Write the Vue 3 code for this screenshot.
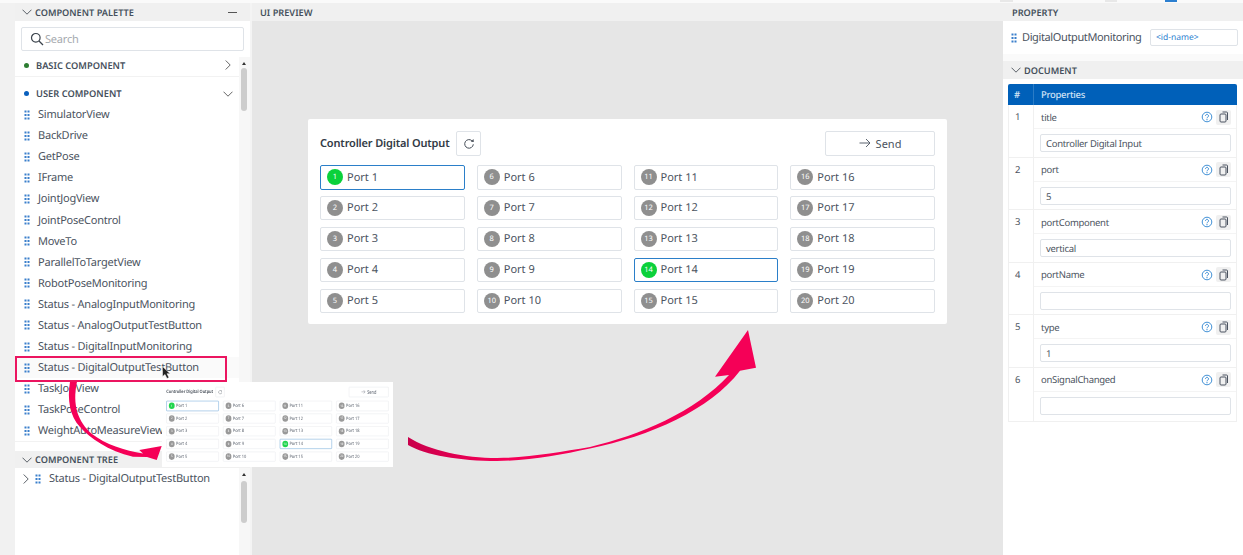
<script setup>
const items = ['SimulatorView','BackDrive','GetPose','IFrame','JointJogView','JointPoseControl','MoveTo','ParallelToTargetView','RobotPoseMonitoring','Status - AnalogInputMonitoring','Status - AnalogOutputTestButton','Status - DigitalInputMonitoring','Status - DigitalOutputTestButton','TaskJogView','TaskPoseControl','WeightAutoMeasureView']
const ports = []
for (let r = 1; r <= 5; r++) for (let c = 0; c < 4; c++) { const n = r + c * 5; ports.push({ n, on: n === 1 || n === 14 }) }
const props = [
  { k: 'title', v: 'Controller Digital Input' },
  { k: 'port', v: '5' },
  { k: 'portComponent', v: 'vertical' },
  { k: 'portName', v: '' },
  { k: 'type', v: '1' },
  { k: 'onSignalChanged', v: '' }
]
const grip = [[0.5,0.5],[3.5,0.5],[0.5,4],[3.5,4],[0.5,7.5],[3.5,7.5]]
</script>

<template>
  <div class="page">
    <div class="topstrip"><i class="tick t1"></i><i class="tick t2"></i><i class="tick t3"></i></div>
    <div class="main">
      <div class="gutter"></div>

      <aside class="left">
        <header class="head">
          <svg class="chev" viewBox="0 0 10 6"><path d="M.5.7 5 5.200 9.500.7"/></svg>
          <span class="title">COMPONENT PALETTE</span>
          <span class="minus"></span>
        </header>
        <div class="searchwrap">
          <div class="search">
            <svg class="lens" viewBox="0 0 14 14"><circle cx="5.800" cy="5.800" r="4.300"/><path d="M9 9l4 4"/></svg>
            <span>Search</span>
          </div>
        </div>
        <div class="scrollarea list">
          <div class="content">
            <div class="group basic">
              <i class="dot green"></i><span class="gname">BASIC COMPONENT</span>
              <svg class="rchev" viewBox="0 0 6 10"><path d="M.7.5 5.200 5 .7 9.500"/></svg>
            </div>
            <div class="group user">
              <i class="dot blue"></i><span class="gname">USER COMPONENT</span>
              <svg class="dchev" viewBox="0 0 10 6"><path d="M.5.7 5 5.200 9.500.7"/></svg>
            </div>
            <div v-for="it in items" :key="it" class="item" :class="{ hot: it === 'Status - DigitalOutputTestButton' }">
              <svg class="grip" viewBox="0 0 6 10"><rect v-for="(g, i) in grip" :key="i" :x="g[0]" :y="g[1]" width="2" height="2"/></svg>
              <span>{{ it }}</span>
            </div>
          </div>
          <div class="bar">
            <i class="up"></i>
            <i class="thumb t-list"></i>
          </div>
        </div>
        <div class="gap"></div>
        <header class="head tree-head">
          <svg class="chev" viewBox="0 0 10 6"><path d="M.5.7 5 5.200 9.500.7"/></svg>
          <span class="title">COMPONENT TREE</span>
        </header>
        <div class="scrollarea tree">
          <div class="content">
            <div class="node">
              <svg class="nchev" viewBox="0 0 6 10"><path d="M.7.5 5.200 5 .7 9.500"/></svg>
              <svg class="grip" viewBox="0 0 6 10"><rect v-for="(g, i) in grip" :key="i" :x="g[0]" :y="g[1]" width="2" height="2"/></svg>
              <span>Status - DigitalOutputTestButton</span>
            </div>
          </div>
          <div class="bar">
            <i class="up"></i>
            <i class="thumb t-tree"></i>
          </div>
        </div>
      </aside>

      <div class="split"></div>

      <section class="center">
        <header class="head chead"><span class="title">UI PREVIEW</span></header>
        <div class="stage">
          <div class="card">
            <div class="card-top">
              <strong>Controller Digital Output</strong>
              <button class="refresh">
                <svg viewBox="0 0 12 12"><path d="M10.300 6.300A4.300 4.300 0 1 1 8.900 2.700"/><path class="fill" d="M7.800 3.700 10.800 4 10.500 1z"/></svg>
              </button>
              <button class="send">
                <svg viewBox="0 0 12 10"><path d="M.5 5h10.500M7 1l4 4-4 4"/></svg>
                <span>Send</span>
              </button>
            </div>
            <div class="ports">
              <div v-for="p in ports" :key="p.n" class="port" :class="{ on: p.on }">
                <i class="badge">{{ p.n }}</i><span>Port {{ p.n }}</span>
              </div>
            </div>
          </div>
        </div>
      </section>

      <aside class="right">
        <header class="head rhead"><span class="title">PROPERTY</span></header>
        <div class="idrow">
          <svg class="grip" viewBox="0 0 6 10"><rect v-for="(g, i) in grip" :key="i" :x="g[0]" :y="g[1]" width="2" height="2"/></svg>
          <span class="cname">DigitalOutputMonitoring</span>
          <div class="idname">&lt;id-name&gt;</div>
        </div>
        <div class="rgap"></div>
        <header class="head dhead">
          <svg class="chev" viewBox="0 0 10 6"><path d="M.5.7 5 5.200 9.500.7"/></svg>
          <span class="title">DOCUMENT</span>
        </header>
        <div class="tablewrap">
          <div class="thead"><span class="th-n">#</span><span class="th-p">Properties</span></div>
          <div v-for="(p, i) in props" :key="p.k" class="prow">
            <div class="pnum">{{ i + 1 }}</div>
            <div class="pbody">
              <div class="plabel">
                <span class="pkey">{{ p.k }}</span>
                <svg class="help" viewBox="0 0 12 12"><circle cx="6" cy="6" r="4.800"/><path d="M4.500 4.800a1.500 1.500 0 1 1 2.300 1.300c-.6.400-.8.600-.8 1.200"/><circle class="fill" cx="6" cy="8.700" r=".6"/></svg>
                <span class="copy"><svg viewBox="0 0 12 12"><rect x="2" y="3" width="6" height="8" rx="1"/><path d="M4.500 1h4a1 1 0 0 1 1 1v7"/></svg></span>
              </div>
              <div class="pinput"><div class="field">{{ p.v }}</div></div>
            </div>
          </div>
        </div>
      </aside>
    </div>

    <!-- annotations lying over the screenshot -->
    <div class="callout"></div>
    <svg class="cursor" viewBox="0 0 9 13"><path d="M.5.500v10l2.500-2 2 4 2-1-2-3.800h3.200z"/></svg>
    <svg class="arrows" viewBox="0 0 1243 555">
      <defs>
        <linearGradient id="fade" x1="408" y1="0" x2="500" y2="0" gradientUnits="userSpaceOnUse">
          <stop offset="0" stop-color="#c9004b"/><stop offset="1" stop-color="#f50057"/>
        </linearGradient>
      </defs>
      <path fill="url(#fade)" d="M408 437C430 451 465 458 497 458 530 457.500 560 452 590 447 640 435 695 412 729 375L715 376.700 748 330 756 367.700 740 370.700C710 410 650 436 590 448.500 560 455 530 460.500 497 461 460 461 425 455 408 445Z"/>
      <path fill="#f50057" d="M70 381.700C67 400 70 416 80 427 90 438 108 451 133 456.700L147 457 156.700 460 161.700 446 139.300 450 143 453.500C125 451 105 444 92 434 78 422 72 405 77 381.700Z"/>
    </svg>
    <div class="mini">
      <div class="mini-inner">
        <div class="card">
          <div class="card-top">
            <strong>Controller Digital Output</strong>
            <button class="refresh">
              <svg viewBox="0 0 12 12"><path d="M10.300 6.300A4.300 4.300 0 1 1 8.900 2.700"/><path class="fill" d="M7.800 3.700 10.800 4 10.500 1z"/></svg>
            </button>
            <button class="send">
              <svg viewBox="0 0 12 10"><path d="M.5 5h10.500M7 1l4 4-4 4"/></svg>
              <span>Send</span>
            </button>
          </div>
          <div class="ports">
            <div v-for="p in ports" :key="p.n" class="port" :class="{ on: p.on }">
              <i class="badge">{{ p.n }}</i><span>Port {{ p.n }}</span>
            </div>
          </div>
        </div>
      </div>
    </div>
  </div>
</template>

<style>
html, body { margin: 0; background: #f1f1f1; }
</style>

<style scoped>
* { box-sizing: border-box; }
.page { position: relative; width: 1243px; height: 555px; overflow: hidden; font-family: "Noto Sans", sans-serif; color: #4b5360; background: #f1f1f1; text-rendering: geometricPrecision; }
.topstrip { position: relative; height: 3px; background: #fafafa; }
.tick { position: absolute; top: 0; height: 2px; background: #e8e8e8; }
.t1 { left: 1000px; width: 13px; }
.t2 { left: 1105px; width: 12px; }
.t3 { left: 1165px; width: 12px; background: #2c7fd0; }
.main { display: flex; height: 552px; }
.gutter { width: 15px; flex: none; background: #f1f1f1; }
.head { display: flex; align-items: center; height: 18px; background: #f0f0f0; flex: none; }
.title { font-size: 9.200px; font-weight: 600; color: #46505c; }
.chev { width: 10px; height: 6px; fill: none; stroke: #5a6068; stroke-width: 1; margin: 0 3px 0 7px; }

.left { width: 235px; flex: none; display: flex; flex-direction: column; background: #fff; }
.minus { width: 9px; height: 1px; background: #555; margin-left: auto; margin-right: 13px; }
.searchwrap { height: 36px; padding: 6px 6px 0; flex: none; }
.search { display: flex; align-items: center; height: 24px; border: 1px solid #dfe3e8; border-radius: 2px; padding-left: 8px; font-size: 11px; letter-spacing: -.2px; color: #a5a9ae; }
.lens { width: 14px; height: 14px; fill: none; stroke: #3b434c; stroke-width: 1.200; margin-right: 1px; }
.scrollarea { display: flex; }
.list { height: 384px; flex: none; }
.tree { flex: 1; min-height: 0; }
.content { width: 224px; overflow: hidden; }
.bar { position: relative; width: 11px; background: #f7f7f7; }
.up { position: absolute; left: 3px; top: 5px; border: 2.500px solid transparent; border-top: 0; border-bottom: 3px solid #333; }
.thumb { position: absolute; left: 2px; width: 6px; background: #cdcdcd; border-radius: 3px; }
.t-list { top: 11px; height: 43px; }
.t-tree { top: 13px; height: 42px; }
.group { display: flex; align-items: center; padding-left: 9px; }
.basic { height: 20px; border-bottom: 1px solid #f2f2f2; padding-bottom: 3px; margin-bottom: 6px; }
.user { height: 21px; }
.dot { width: 5px; height: 5px; border-radius: 50%; flex: none; margin-right: 7px; }
.green { background: #2d7d32; }
.blue { background: #0a60bd; }
.gname { font-size: 9.300px; font-weight: 600; color: #46505c; }
.rchev { width: 6px; height: 10px; fill: none; stroke: #666; stroke-width: 1; margin-left: auto; margin-right: 8px; }
.dchev { width: 10px; height: 6px; fill: none; stroke: #666; stroke-width: 1; margin-left: auto; margin-right: 6px; }
.item { display: flex; align-items: center; height: 21.100px; padding-left: 9px; font-size: 11px; letter-spacing: -.22px; white-space: nowrap; }
.item.hot { background: #fafafa; }
.grip { width: 6px; height: 10px; fill: #3a7fcb; flex: none; margin-right: 8px; }
.gap { height: 10px; flex: none; background: #fff; border-top: 1px solid #f2f2f2; }
.tree-head { height: 17px; }
.node { display: flex; align-items: center; height: 21px; padding: 0 0 0 8px; font-size: 11px; letter-spacing: -.22px; white-space: nowrap; }
.nchev { width: 6px; height: 10px; fill: none; stroke: #5a6068; stroke-width: 1; margin-right: 6px; }
.node .grip { margin-right: 8px; }
.split { width: 2px; flex: none; background: #f4f4f4; }

.center { width: 751px; flex: none; display: flex; flex-direction: column; }
.chead { padding-left: 8px; }
.stage { flex: 1; background: #e6e6e6; padding-top: 98px; }
.card { width: 639px; height: 205px; margin: 0 auto; background: #fff; border-radius: 2px; padding: 12px; }
.card-top { display: flex; align-items: center; height: 25px; margin-bottom: 9px; }
.card-top strong { width: 136px; font-size: 11px; font-weight: 600; letter-spacing: -.16px; color: #333b46; white-space: nowrap; }
.refresh { width: 25px; height: 25px; padding: 0; display: flex; align-items: center; justify-content: center; background: #fff; border: 1px solid #dfe3e8; border-radius: 2px; }
.refresh svg { width: 12px; height: 12px; fill: none; stroke: #444c56; stroke-width: 1; }
.refresh .fill { fill: #444c56; stroke: none; }
.send { width: 110px; height: 25px; margin-left: auto; padding: 0 0 1px; display: flex; align-items: center; justify-content: center; gap: 5px; background: #fff; border: 1px solid #dfe3e8; border-radius: 2px; font: 11px "Noto Sans", sans-serif; color: #4b5360; }
.send svg { width: 12px; height: 10px; fill: none; stroke: #4b5360; stroke-width: .9; }
.ports { display: grid; grid-template-columns: repeat(4, 1fr); grid-auto-rows: 24.500px; gap: 6.400px 12px; }
.port { display: flex; align-items: center; padding: 0 0 .4px 6px; border: 1px solid #dfe3e8; border-radius: 2px; font-size: 11px; white-space: nowrap; }
.port.on { border-color: #2b7fc9; }
.badge { width: 16px; height: 16px; border-radius: 50%; background: #8f8f8f; color: #fff; font-style: normal; font-size: 7.500px; line-height: 16px; text-align: center; margin-right: 4px; flex: none; }
.on .badge { background: #0bd13b; }

.right { width: 240px; flex: none; min-width: 0; background: #fff; display: flex; flex-direction: column; }
.rhead { padding-left: 9px; }
.idrow { display: flex; align-items: center; height: 33px; padding-left: 8px; flex: none; }
.idrow .grip { margin-right: 5px; }
.cname { width: 128px; font-size: 11px; letter-spacing: -.38px; white-space: nowrap; flex: none; }
.idname { width: 88px; height: 17px; border: 1px solid #dfe3e8; border-radius: 2px; padding-left: 5px; font-size: 8.500px; line-height: 15px; color: #2d7fd0; flex: none; }
.rgap { height: 7px; background: #fafafa; flex: none; }
.dhead .chev { margin: 0 3px 0 8px; }
.tablewrap { margin: 5px 6px 0 5px; border: 1px solid #f0f0f0; border-top: 0; border-radius: 2px 2px 0 0; }
.thead { display: flex; align-items: center; height: 21px; margin: 0 -1px; background: #0060b9; color: #cfe2f5; border-radius: 2px 2px 0 0; font-size: 9.500px; font-weight: 500; letter-spacing: -.3px; }
.th-n { width: 26px; padding-left: 6px; border-right: 1px solid #2b7cc6; line-height: 21px; font-weight: 600; }
.th-p { padding-left: 7px; }
.prow { display: flex; height: 52.600px; border-bottom: 1px solid #f0f0f0; }
.prow:last-child { border-bottom: 0; }
.pnum { width: 25px; border-right: 1px solid #f0f0f0; padding: 5px 0 0 6px; font-size: 9.500px; }
.pbody { flex: 1; display: flex; flex-direction: column; }
.plabel { display: flex; align-items: center; height: 24px; padding: 1px 5px 0 7px; border-bottom: 1px solid #f4f4f4; flex: none; }
.pkey { font-size: 9.500px; letter-spacing: -.3px; flex: 1; }
.help { width: 12px; height: 12px; fill: none; stroke: #2b83d0; stroke-width: .9; margin-right: 3px; }
.help .fill { fill: #2b83d0; stroke: none; }
.copy { width: 15px; height: 15px; background: #f0f0f0; border-radius: 2px; display: flex; align-items: center; justify-content: center; }
.copy svg { width: 12px; height: 12px; fill: none; stroke: #4b5360; stroke-width: 1; }
.pinput { padding: 5px 5px 0 6px; }
.field { height: 18px; border: 1px solid #dfe3e8; border-radius: 2px; padding-left: 5px; font-size: 9.500px; letter-spacing: -.3px; line-height: 17px; }

.callout { position: absolute; left: 15px; top: 356px; width: 212px; height: 26px; border: 2px solid #eb1560; }
.cursor { position: absolute; left: 162px; top: 366px; width: 9px; height: 13px; fill: #222; stroke: #fff; stroke-width: .5; }
.arrows { position: absolute; inset: 0; width: 1243px; height: 555px; pointer-events: none; }
.mini { position: absolute; left: 162px; top: 382px; width: 231px; height: 85px; background: #fff; overflow: hidden; }
.mini-inner { width: 639px; height: 205px; transform: scale(.3615, .41); transform-origin: 0 0; filter: blur(1px); opacity: .9; }
</style>
